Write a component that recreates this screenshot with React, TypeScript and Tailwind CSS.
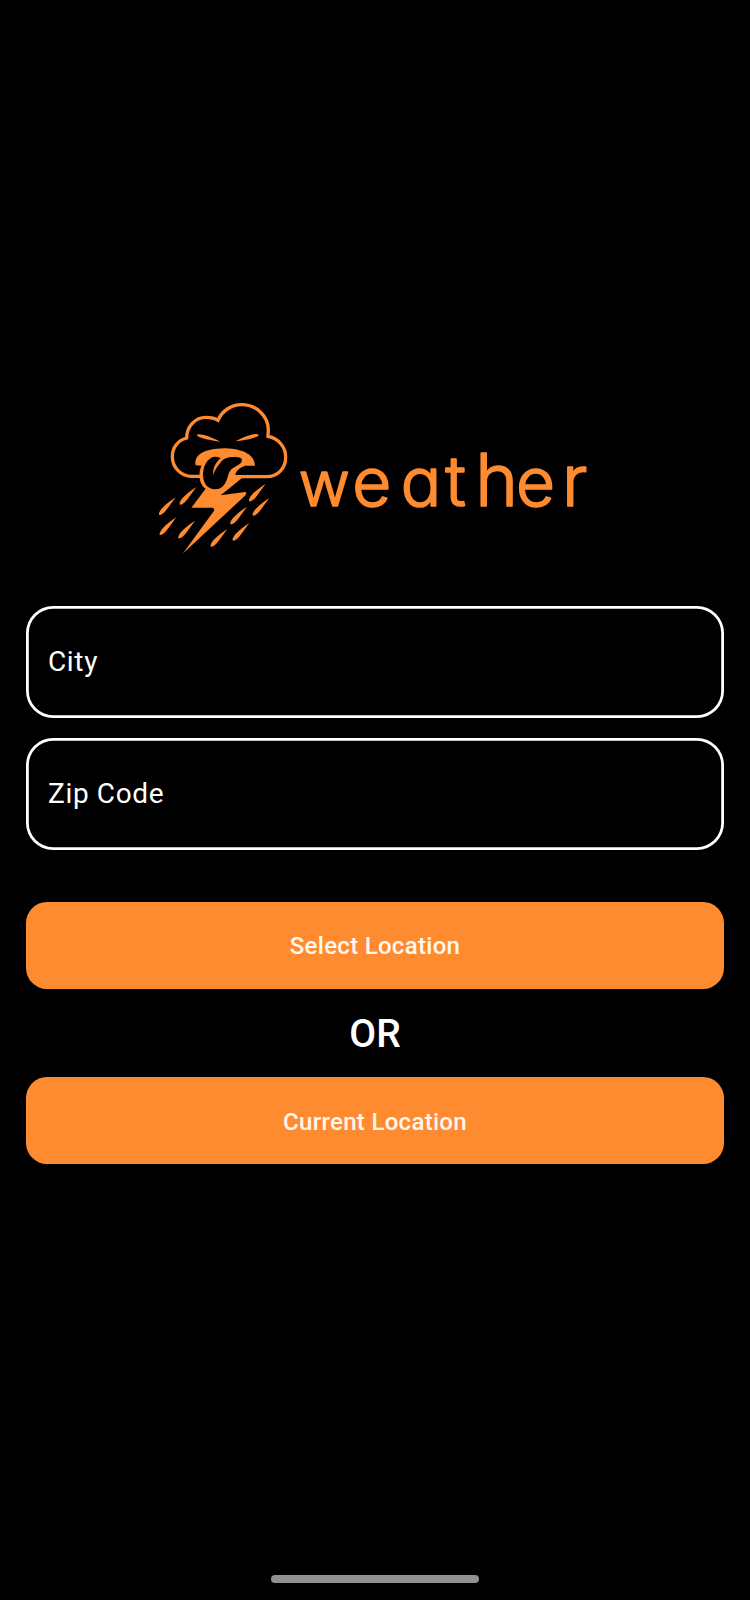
function Drop({ x, y }: { x: number; y: number }) {
  return (
    <path
      transform={`translate(${x} ${y})`}
      d="M0 0C-14 9 -31 22 -42 34C-51 45 -53 55 -46 53C-38 51 -31 43 -24 33Z"
    />
  );
}

const drops = [
  [77, 307], [139, 276], [79, 367], [135, 377], [347, 266],
  [358, 309], [291, 335], [298, 384], [232, 402],
];

function Logo() {
  return (
    <svg width="450" height="165" viewBox="0 0 1350 495" fill="#ff8b30" role="img" aria-label="weather">
      <path
        d="M152 244H122C90 242 67 215 67 185C67 157 84 136 110 129C110 94 135 67 169 67C184 67 195 70 204 76C217 46 245 29 275 29C320 29 355 64 355 105L354 124C386 130 407 156 407 187C407 220 383 245 350 245H240"
        fill="none"
        stroke="#ff8b30"
        strokeWidth="10"
      />
      <path d="M141 120C144 115 157 118 172 123C188 129 202 135 210 140C190 137 172 134 156 129C146 126 141 124 141 120Z" />
      <path d="M326 120C323 115 309 117 294 122C279 127 265 133 257 139C276 137 292 134 309 129C320 126 326 124 326 120Z" />
      <path d="M137 211C132 188 148 161 225 160C288 162 314 184 315 212H290L270 200H185L158 212Z" />
      <path d="M168 280L124 338H187Q196 341 191 349L98 476L285 302Q293 293 285 291L212 301L276 249L283 241L232 244L226 280Z" />
      <path d="M158 205C150 220 147 232 149 250C152 275 171 291 197 291C222 291 240 272 256 246C254 229 268 219 290 210L270 184H184Z" />
      <path
        d="M184 188C167 198 159 218 159 241C160 265 172 282 195 283C220 283 229 262 234 242C239 221 255 216 268 208C280 200 278 187 263 187C242 184 222 188 211 203C202 214 195 224 190 239C188 219 197 202 212 189C201 184 190 184 184 188Z"
        fill="#000"
      />
      {drops.map(([x, y]) => (
        <Drop key={`${x}-${y}`} x={x} y={y} />
      ))}
      <text
        y="333"
        fontFamily="Inter, sans-serif"
        fontSize="198"
        fontWeight="300"
        stroke="#ff8b30"
        strokeWidth="5"
        strokeLinejoin="round"
        className="[font-feature-settings:'cv11']"
      >
        <tspan x="446" fontSize="188">w</tspan>
        <tspan x="607" fontSize="202">e</tspan>
        <tspan x="752" fontSize="202">a</tspan>
        <tspan x="886" fontSize="208">t</tspan>
        <tspan x="976" fontSize="218">h</tspan>
        <tspan x="1098" fontSize="202">e</tspan>
        <tspan x="1236" fontSize="212">r</tspan>
      </text>
    </svg>
  );
}

function Field({ label }: { label: string }) {
  return (
    <input
      aria-label={label}
      placeholder={label}
      className="h-28 w-full rounded-[27px] bg-transparent px-[22px] pb-[2px] text-[28px] tracking-[0.65px] shadow-[inset_0_0_0_2.8px_#fff] outline-none placeholder:text-white"
    />
  );
}

export default function App() {
  return (
    <main className="flex h-[1600px] w-[750px] flex-col bg-black px-[26px] pt-[395px] font-['Roboto',sans-serif] text-white">
      <div className="flex h-[165px] justify-center">
        <Logo />
      </div>
      <div className="mt-[46px] flex flex-col gap-5">
        <Field label="City" />
        <Field label="Zip Code" />
      </div>
      <button className="mt-[52px] h-[87px] shrink-0 rounded-[21px] bg-[#ff8b30] text-2xl font-medium tracking-[0.3px] text-[#fff8ee]">
        Select Location
      </button>
      <div className="flex h-[88px] shrink-0 items-center justify-center pt-[2px] text-[39px] font-medium">OR</div>
      <button className="h-[87px] shrink-0 rounded-[21px] bg-[#ff8b30] pt-[2px] text-2xl font-medium tracking-[0.3px] text-[#fff8ee]">
        Current Location
      </button>
      <div className="mt-auto mb-[17px] h-2 w-52 shrink-0 self-center rounded-full bg-[#919191]" />
    </main>
  );
}
